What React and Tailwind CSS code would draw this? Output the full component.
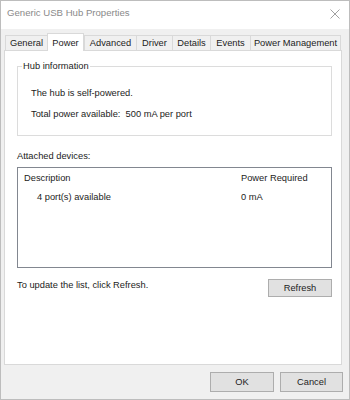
import React from 'react';

const tabs = [
    { name: 'General', w: 'w-[42px]' },
    { name: 'Power', w: 'w-[37px]' },
    { name: 'Advanced', w: 'w-[52px]' },
    { name: 'Driver', w: 'w-[36px]' },
    { name: 'Details', w: 'w-[38px]' },
    { name: 'Events', w: 'w-[40px]' },
    { name: 'Power Management', w: 'w-[91px]' },
];

const App = () => {
    return (
        <div className="w-[350px] h-[400px] bg-[#f0f0f0] border border-[#bdbdbd] flex flex-col text-[9.3px] leading-[12px] text-[#1c1c1c]" style={{ fontFamily: '"Liberation Sans", Arial, sans-serif' }}>
            {/* title bar */}
            <div className="h-[28px] bg-white flex items-start justify-between pl-[6px] pr-[9px] pt-[6px] shrink-0">
                <span className="text-[9.6px] text-[#8a8a8a]">Generic USB Hub Properties</span>
                <svg width="10" height="10" viewBox="0 0 10 10" className="mt-[2px]">
                    <path d="M0.5 0.5 L9.5 9.5 M9.5 0.5 L0.5 9.5" stroke="#a0a0a0" strokeWidth="1" />
                </svg>
            </div>

            <div className="flex-1 flex flex-col pl-[3px] pt-[4px]">
                {/* tabs */}
                <div className="flex items-end h-[17px] pl-[1px]">
                    {tabs.map((tab, i) => (
                        tab.name === 'Power' ? (
                            <div key={tab.name} className={`${tab.w} h-[18px] -mb-px bg-white border border-b-0 border-[#d9d9d9] flex items-center justify-center relative z-10`}>
                                {tab.name}
                            </div>
                        ) : (
                            <div key={tab.name} className={`${tab.w} h-[15px] border-t border-l ${i === tabs.length - 1 ? 'border-r' : ''} border-[#d9d9d9] flex items-center justify-center`}>
                                {tab.name}
                            </div>
                        )
                    ))}
                </div>

                {/* tab panel */}
                <div className="w-[338px] h-[315px] bg-white border border-[#d9d9d9] pl-[12px] flex flex-col">
                    <div className="relative border border-[#dcdcdc] w-[315px] h-[70px] mt-[15px] pl-[13px] pt-[20px]">
                        <span className="absolute -top-[7px] left-[4px] bg-white px-[1px]">Hub information</span>
                        <div>The hub is self-powered.</div>
                        <div className="mt-[9px]">Total power available:&nbsp; 500 mA per port</div>
                    </div>

                    <div className="mt-[14px]">Attached devices:</div>
                    <div className="mt-[5px] w-[315px] h-[101px] border border-[#828790] flex flex-col">
                        <div className="flex h-[20px] items-center">
                            <div className="w-[218px] pl-[6px]">Description</div>
                            <div className="pl-[5px]">Power Required</div>
                        </div>
                        <div className="flex h-[17px] items-center">
                            <div className="w-[218px] pl-[19px]">4 port(s) available</div>
                            <div className="pl-[5px]">0 mA</div>
                        </div>
                    </div>

                    <div className="w-[315px] flex justify-between items-start mt-[11px]">
                        <span className="mt-[0px]">To update the list, click Refresh.</span>
                        <button className="w-[64px] h-[18px] bg-[#e1e1e1] border border-[#adadad] flex items-center justify-center">Refresh</button>
                    </div>
                </div>

                {/* footer buttons */}
                <div className="flex justify-end gap-[6px] mt-[7px] pr-[6px]">
                    <button className="w-[64px] h-[20px] bg-[#e1e1e1] border border-[#adadad] flex items-center justify-center">OK</button>
                    <button className="w-[63px] h-[20px] bg-[#e1e1e1] border border-[#adadad] flex items-center justify-center">Cancel</button>
                </div>
            </div>
        </div>
    );
};

export default App;
